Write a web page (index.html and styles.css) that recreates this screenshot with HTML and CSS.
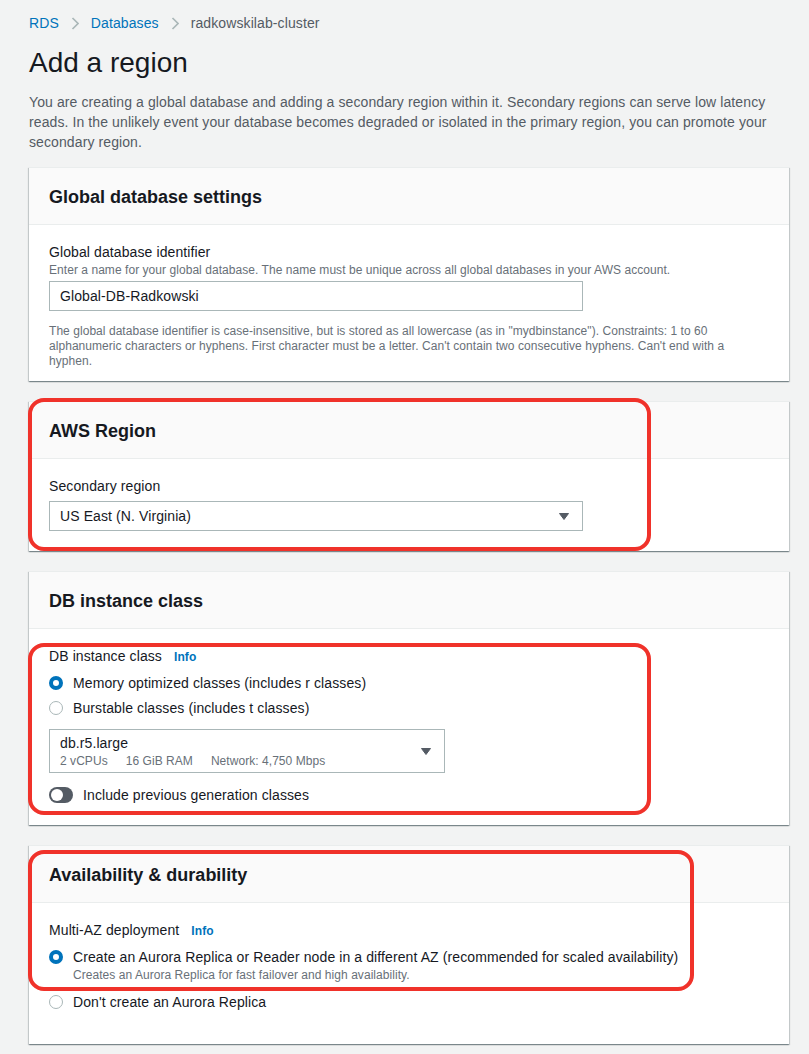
FILE: index.html
```html
<!DOCTYPE html>
<html lang="en">
<head>
<meta charset="utf-8">
<title>Add a region</title>
<link rel="stylesheet" href="styles.css">
</head>
<body>
<div class="page">
  <nav class="breadcrumbs">
    <a class="crumb-link" href="#">RDS</a>
    <svg class="crumb-sep" viewBox="0 0 8 13" width="8" height="13"><path d="M1.5 1 L7 6.5 L1.5 12"/></svg>
    <a class="crumb-link" href="#">Databases</a>
    <svg class="crumb-sep" viewBox="0 0 8 13" width="8" height="13"><path d="M1.5 1 L7 6.5 L1.5 12"/></svg>
    <span class="crumb-current">radkowskilab-cluster</span>
  </nav>

  <h1 class="page-title">Add a region</h1>
  <p class="page-desc">You are creating a global database and adding a secondary region within it. Secondary regions can serve low latency reads. In the unlikely event your database becomes degraded or isolated in the primary region, you can promote your secondary region.</p>

  <section class="panel">
    <header class="panel-header"><h2 class="panel-title">Global database settings</h2></header>
    <div class="panel-body">
      <div class="field-label">Global database identifier</div>
      <div class="field-desc">Enter a name for your global database. The name must be unique across all global databases in your AWS account.</div>
      <div class="text-input">Global-DB-Radkowski</div>
      <div class="field-constraint">The global database identifier is case-insensitive, but is stored as all lowercase (as in "mydbinstance"). Constraints: 1 to 60 alphanumeric characters or hyphens. First character must be a letter. Can't contain two consecutive hyphens. Can't end with a hyphen.</div>
    </div>
  </section>

  <section class="panel">
    <header class="panel-header"><h2 class="panel-title">AWS Region</h2></header>
    <div class="panel-body panel-body-select">
      <div class="field-label">Secondary region</div>
      <div class="select select-region">
        <span class="select-value">US East (N. Virginia)</span>
        <svg class="select-caret" viewBox="0 0 10 7" width="10" height="7"><path d="M0.5 0.5 H9.5 L5 6.5 Z"/></svg>
      </div>
    </div>
  </section>

  <section class="panel">
    <header class="panel-header"><h2 class="panel-title">DB instance class</h2></header>
    <div class="panel-body panel-body-class">
      <div class="field-label">DB instance class <a class="info-link" href="#">Info</a></div>
      <div class="radio-group">
        <div class="radio-row">
          <span class="radio radio-checked"></span>
          <span class="radio-text">Memory optimized classes (includes r classes)</span>
        </div>
        <div class="radio-row">
          <span class="radio"></span>
          <span class="radio-text">Burstable classes (includes t classes)</span>
        </div>
      </div>
      <div class="select select-class">
        <div class="select-option">
          <div class="option-main">db.r5.large</div>
          <div class="option-tags">
            <span class="option-tag">2 vCPUs</span>
            <span class="option-tag">16 GiB RAM</span>
            <span class="option-tag">Network: 4,750 Mbps</span>
          </div>
        </div>
        <svg class="select-caret" viewBox="0 0 10 7" width="10" height="7"><path d="M0.5 0.5 H9.5 L5 6.5 Z"/></svg>
      </div>
      <div class="toggle-row">
        <span class="toggle"><span class="toggle-knob"></span></span>
        <span class="toggle-text">Include previous generation classes</span>
      </div>
    </div>
  </section>

  <section class="panel">
    <header class="panel-header"><h2 class="panel-title">Availability &amp; durability</h2></header>
    <div class="panel-body panel-body-az">
      <div class="field-label">Multi-AZ deployment <a class="info-link" href="#">Info</a></div>
      <div class="radio-group">
        <div class="radio-row">
          <span class="radio radio-checked"></span>
          <div class="radio-content">
            <div class="radio-text">Create an Aurora Replica or Reader node in a different AZ (recommended for scaled availability)</div>
            <div class="radio-desc">Creates an Aurora Replica for fast failover and high availability.</div>
          </div>
        </div>
        <div class="radio-row">
          <span class="radio"></span>
          <span class="radio-text">Don't create an Aurora Replica</span>
        </div>
      </div>
    </div>
  </section>

  <div class="annotation annotation-region"></div>
  <div class="annotation annotation-class"></div>
  <div class="annotation annotation-az"></div>
</div>
</body>
</html>
```

FILE: styles.css
```css
* {
  box-sizing: border-box;
}

html, body {
  margin: 0;
  padding: 0;
  background: #f2f3f3;
}

body {
  font-family: "Liberation Sans", Arial, sans-serif;
  font-size: 14px;
  line-height: 20px;
  letter-spacing: 0.1px;
  color: #16191f;
}

.page {
  position: relative;
  padding: 13px 20px 10px 29px;
}

/* Breadcrumbs */
.breadcrumbs {
  display: flex;
  align-items: center;
  gap: 12px;
  height: 20px;
}

.crumb-link {
  color: #0073bb;
  text-decoration: none;
}

.crumb-current {
  color: #545b64;
}

.crumb-sep {
  display: block;
  fill: none;
  stroke: #aab7b8;
  stroke-width: 1.7;
}

/* Header */
.page-title {
  margin: 12px 0 11px;
  font-size: 28px;
  line-height: 36px;
  font-weight: 400;
  letter-spacing: 0;
  color: #16191f;
}

.page-desc {
  margin: 0 0 15px;
  color: #545b64;
}

/* Panels */
.panel {
  background: #fff;
  border-top: 1px solid #eaeded;
  box-shadow: 0 1px 1px 0 rgba(0, 28, 36, 0.3), 1px 1px 1px 0 rgba(0, 28, 36, 0.15), -1px 1px 1px 0 rgba(0, 28, 36, 0.15);
  margin-bottom: 20px;
}

.panel-header {
  background: #fafafa;
  border-bottom: 1px solid #eaeded;
  padding: 18px 20px 16px;
}

.panel-title {
  margin: 0;
  font-size: 18px;
  line-height: 22px;
  font-weight: 700;
  letter-spacing: 0;
  color: #16191f;
}

.panel-body {
  padding: 17px 20px 12px;
}

.panel-body-select,
.panel-body-class {
  padding-bottom: 20px;
}

.panel-body-az {
  padding-bottom: 32px;
}

/* Form fields */
.field-label {
  color: #16191f;
}

.info-link {
  margin-left: 8px;
  font-size: 12px;
  font-weight: 700;
  color: #0073bb;
  text-decoration: none;
}

.field-desc {
  font-size: 12px;
  line-height: 16px;
  letter-spacing: 0.05px;
  color: #687078;
}

.text-input {
  margin-top: 3px;
  width: 534px;
  height: 30px;
  border: 1px solid #aab7b8;
  padding: 0 10px;
  line-height: 28px;
  color: #16191f;
}

.field-constraint {
  margin-top: 13px;
  max-width: 700px;
  font-size: 12px;
  line-height: 15px;
  letter-spacing: 0.05px;
  color: #687078;
}

/* Select */
.select {
  display: flex;
  align-items: center;
  justify-content: space-between;
  border: 1px solid #aab7b8;
  padding: 0 13px 0 10px;
  background: #fff;
}

.select-region {
  margin-top: 5px;
  width: 534px;
  height: 30px;
}

.select-class {
  margin-top: 11px;
  width: 396px;
  height: 44px;
}

.select-caret {
  display: block;
  fill: #545b64;
  stroke: #545b64;
  stroke-width: 1;
  stroke-linejoin: round;
}

.option-main {
  line-height: 20px;
}

.option-tags {
  display: flex;
  gap: 18px;
  font-size: 12px;
  line-height: 16px;
  letter-spacing: 0.05px;
  color: #687078;
}

/* Radios */
.radio-group {
  margin-top: 6px;
  display: flex;
  flex-direction: column;
  gap: 5px;
}

.radio-row {
  display: flex;
  align-items: flex-start;
  gap: 10px;
}

.radio {
  flex: none;
  width: 14px;
  height: 14px;
  margin-top: 3px;
  border-radius: 50%;
  border: 1.5px solid #aab7b8;
  background: #fff;
}

.radio-checked {
  border: 4px solid #0073bb;
}

.radio-desc {
  font-size: 12px;
  line-height: 16px;
  letter-spacing: 0.05px;
  color: #687078;
  margin-bottom: 4px;
}

/* Toggle */
.toggle-row {
  margin-top: 12px;
  display: flex;
  align-items: center;
  gap: 10px;
}

.toggle {
  position: relative;
  display: block;
  width: 24px;
  height: 16px;
  border-radius: 8px;
  background: #545b64;
}

.toggle-knob {
  position: absolute;
  top: 2px;
  left: 2px;
  width: 12px;
  height: 12px;
  border-radius: 50%;
  background: #fff;
}

/* Red annotation highlights */
.annotation {
  position: absolute;
  border: 4px solid #f0322a;
  border-radius: 16px;
  pointer-events: none;
}

.annotation-region {
  left: 28px;
  top: 398px;
  width: 623px;
  height: 153px;
}

.annotation-class {
  left: 28px;
  top: 643px;
  width: 623px;
  height: 172px;
}

.annotation-az {
  left: 28px;
  top: 850px;
  width: 666px;
  height: 141px;
}
```
